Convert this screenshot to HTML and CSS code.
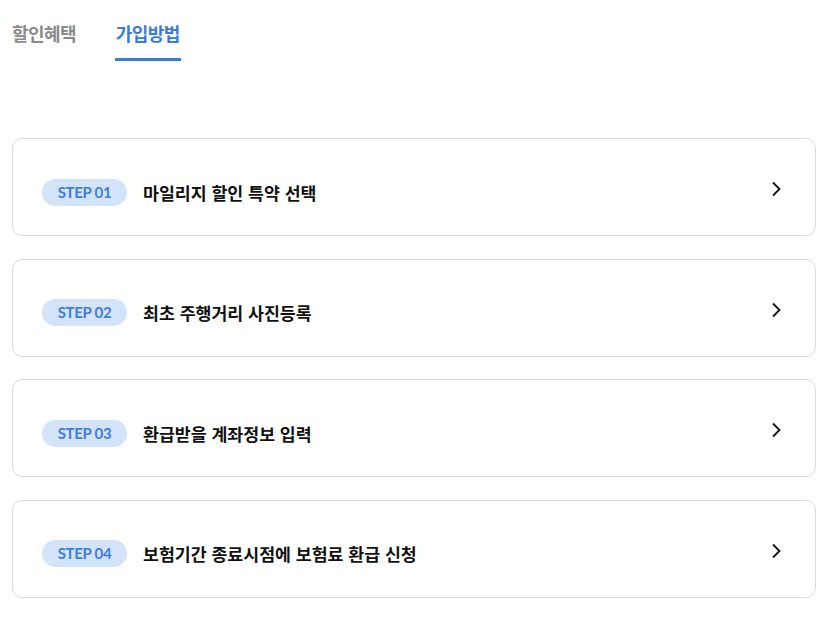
FILE: index.html
```html
<!DOCTYPE html>
<html lang="ko">
<head>
    <meta charset="utf-8">
    <meta name="viewport" content="width=device-width, initial-scale=1.0">
    <title>가입방법</title>
    <link rel="stylesheet" href="styles.css">
</head>
<body>
    <div class="wrap">
        <nav class="tabs">
            <a class="tab">할인혜택</a>
            <a class="tab on">가입방법</a>
        </nav>

        <ul class="steps">
            <li class="step">
                <span class="badge">STEP 01</span>
                <span class="title">마일리지 할인 특약 선택</span>
                <svg class="arrow" width="10" height="16" viewBox="0 0 10 16"><path d="M2 1.5l6.5 6.5L2 14.5" fill="none" stroke="#111" stroke-width="1.8"/></svg>
            </li>
            <li class="step">
                <span class="badge">STEP 02</span>
                <span class="title">최초 주행거리 사진등록</span>
                <svg class="arrow" width="10" height="16" viewBox="0 0 10 16"><path d="M2 1.5l6.5 6.5L2 14.5" fill="none" stroke="#111" stroke-width="1.8"/></svg>
            </li>
            <li class="step">
                <span class="badge">STEP 03</span>
                <span class="title">환급받을 계좌정보 입력</span>
                <svg class="arrow" width="10" height="16" viewBox="0 0 10 16"><path d="M2 1.5l6.5 6.5L2 14.5" fill="none" stroke="#111" stroke-width="1.8"/></svg>
            </li>
            <li class="step">
                <span class="badge">STEP 04</span>
                <span class="title">보험기간 종료시점에 보험료 환급 신청</span>
                <svg class="arrow" width="10" height="16" viewBox="0 0 10 16"><path d="M2 1.5l6.5 6.5L2 14.5" fill="none" stroke="#111" stroke-width="1.8"/></svg>
            </li>
        </ul>
    </div>
</body>
</html>
```

FILE: styles.css
```css
body,html{padding: 0px;margin: 0px;background:#fff;}
body{font-family:"Noto Sans CJK KR","Noto Sans",sans-serif;color:#111;}

.wrap{padding:0 14px 0 12px;}

.tabs{display:flex;gap:40px;padding-top:20px;}
.tab{
	font-size:18px;
	font-weight:700;
	letter-spacing:-0.6px;
	color:#8a8a8a;
	line-height:26px;
	padding:0 0 12px;
	border-bottom:3px solid transparent;
}
.tab.on{color:#3a7bd5;border-bottom-color:#3a7bd5;padding:0 1px 12px 1px;margin-left:-1px;}

.steps{list-style:none;margin:0;padding:0;margin-top:77px;}
.step{
	display:flex;
	align-items:center;
	height:98px;
	box-sizing:border-box;
	border:1px solid #dcdcdc;
	border-radius:10px;
	padding:10px 34px 0 29px;
	margin-bottom:22.5px;
}
.badge{
	font-family:Lato,"Noto Sans",sans-serif;
	font-weight:700;
	font-size:15px;
	color:#3f7ed6;
	background:#d3e3f8;
	border-radius:14px;
	width:85px;
	height:27px;
	line-height:27px;
	text-align:center;
	letter-spacing:-0.3px;
	flex:none;
}
.title{font-size:17.3px;font-weight:700;margin-left:16px;flex:1;}
.arrow{flex:none;margin-top:-6px;}
```
